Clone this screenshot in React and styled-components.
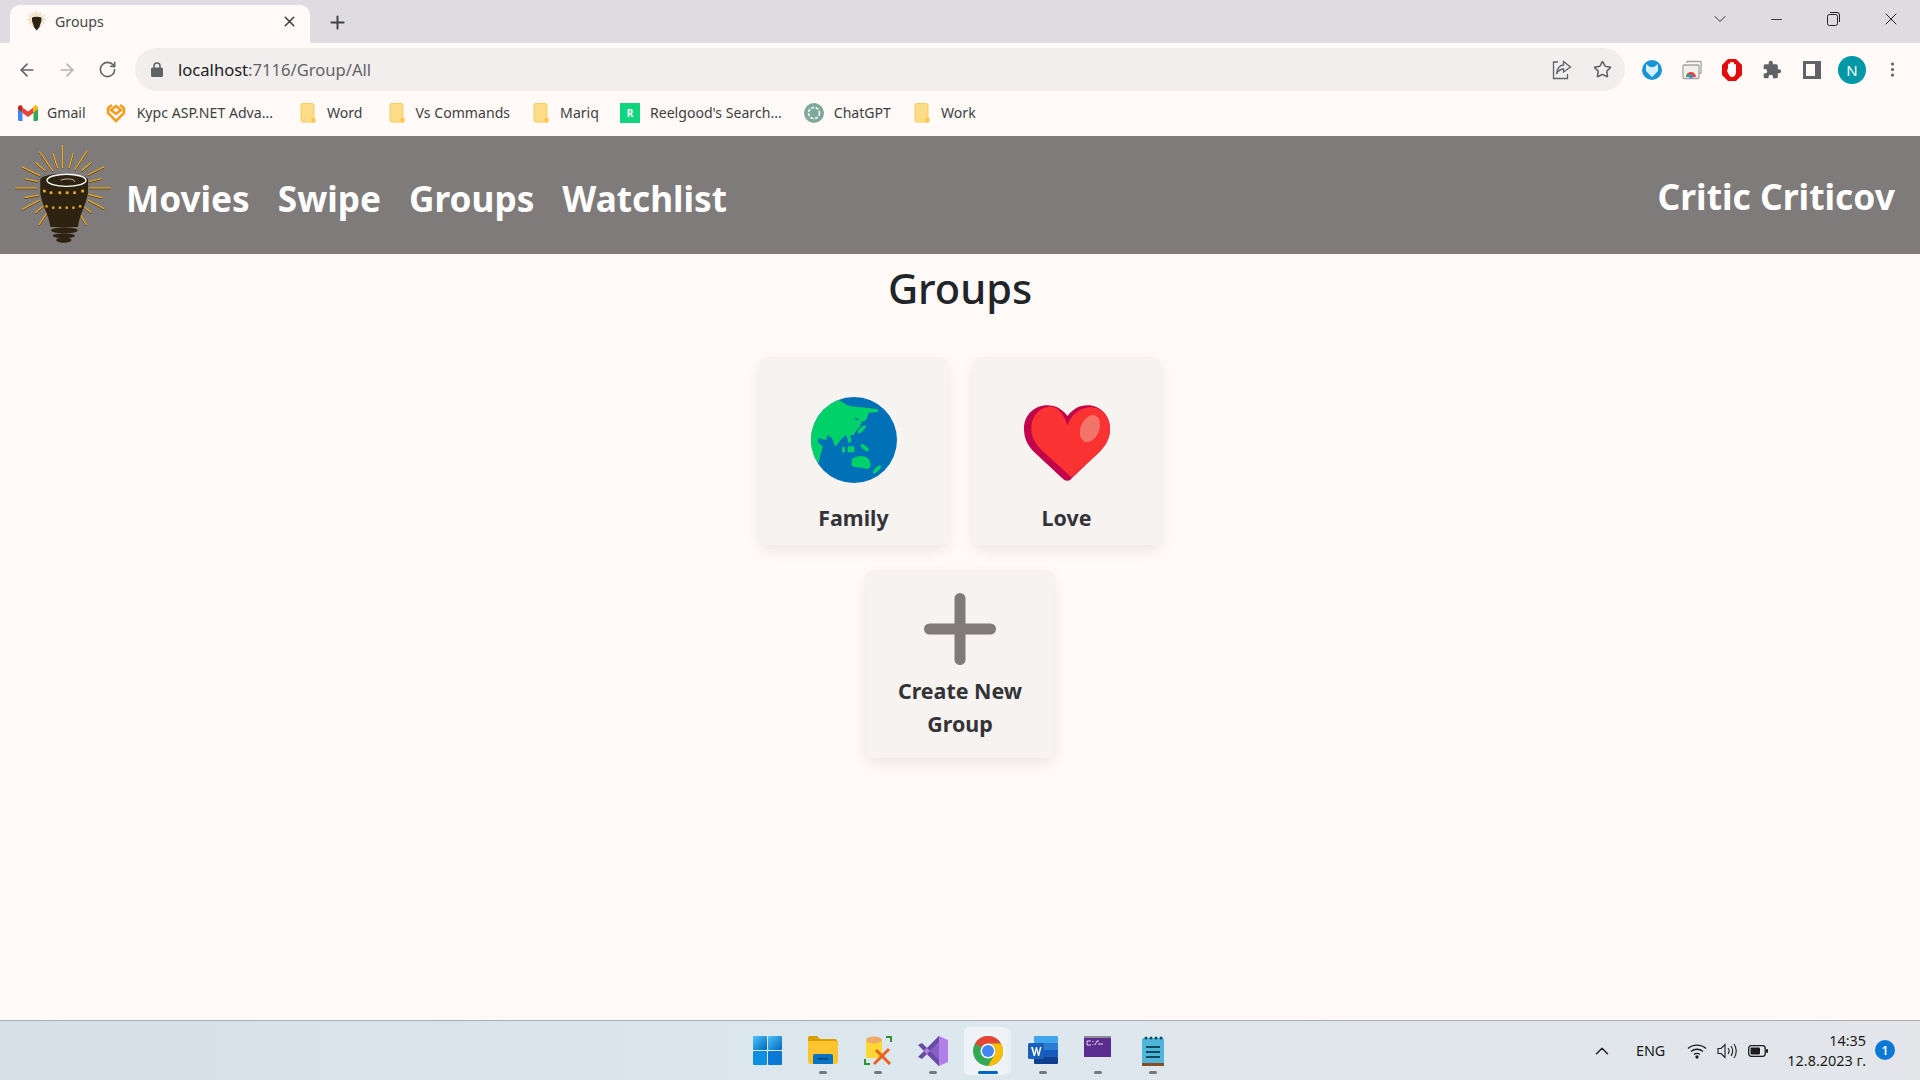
import React from "react";
import styled, { createGlobalStyle } from "styled-components";
import { ArrowLeft, ArrowRight, RotateCw, Star, Plus, X, Minus, ChevronDown, ChevronUp, MoreVertical } from "lucide-react";

const Global = createGlobalStyle`
  html, body { margin: 0; padding: 0; height: 100%; overflow: hidden; background: #fffaf7; }
  body { font-family: "Noto Sans", "Open Sans", sans-serif; }
  #root { height: 100%; }
  * { box-sizing: border-box; }
`;

const Page = styled.div`width:1920px;height:1080px;display:flex;flex-direction:column;background:#fffaf7;position:relative;`;
const TabStrip = styled.div`height:43px;background:#dedce0;display:flex;align-items:flex-end;padding-left:10px;flex:none;`;
const Tab = styled.div`width:300px;height:38px;background:#fffaf7;border-radius:10px 10px 0 0;display:flex;align-items:center;padding:0 12px 6px 17px;`;
const TabTitle = styled.span`font-size:14.2px;color:#45474a;margin-left:9px;flex:1;`;
const NewTab = styled.div`width:54px;height:38px;display:flex;align-items:center;justify-content:center;color:#3f4145;padding-bottom:4px;`;
const WindowControls = styled.div`margin-left:auto;height:43px;display:flex;align-items:flex-start;color:#222;`;
const WinButton = styled.div`width:${p=>p.$w||57}px;height:38px;display:flex;align-items:center;justify-content:center;`;
const Toolbar = styled.div`height:48px;display:flex;align-items:flex-start;padding:5px 8px 0 7px;flex:none;`;
const ToolButton = styled.div`width:${p=>p.$w||40}px;height:43px;display:flex;align-items:center;justify-content:center;color:${p=>p.$dim?"#b4b4b6":"#5f6368"};flex:none;`;
const Omnibox = styled.div`margin:0 7px 0 8px;flex:1;height:43px;background:#f1eeed;border-radius:22px;display:flex;align-items:center;padding:0 3px 0 12px;`;
const Url = styled.div`font-size:16.6px;color:#202124;margin-left:11px;flex:1;span{color:#5f6368;}`;
const Avatar = styled.div`width:28px;height:28px;border-radius:50%;background:#0097a7;color:#fff;font-size:15px;display:flex;align-items:center;justify-content:center;`;
const Bookmarks = styled.div`height:45px;display:flex;align-items:center;padding:0 0 2px 18px;flex:none;`;
const Bookmark = styled.div`display:flex;align-items:center;margin-right:${p=>p.$mr}px;font-size:14.1px;color:#3c3f43;white-space:nowrap;`;
const BookmarkIcon = styled.span`display:flex;margin-right:${p=>p.$mr||11}px;`;
const ReelIcon = styled.span`width:20px;height:20px;background:#0fd67e;color:#fff;font-size:10px;font-weight:700;display:flex;align-items:center;justify-content:center;margin-right:10px;`;
const NavBar = styled.header`height:118px;background:#7f7b7a;display:flex;align-items:center;padding:0 25px 0 15px;flex:none;`;
const NavLinks = styled.nav`display:flex;gap:28px;margin-left:15px;margin-top:6px;`;
const NavLink = styled.a`font-size:35.2px;font-weight:700;color:#fff;`;
const UserName = styled.div`margin-left:auto;font-size:35.4px;font-weight:700;color:#fff;margin-top:2px;`;
const Main = styled.main`flex:1;display:flex;flex-direction:column;align-items:center;`;
const Title = styled.h1`margin:0;font-size:41.5px;font-weight:500;color:#212529;line-height:68px;margin-bottom:35px;`;
const CardGrid = styled.div`width:420px;display:flex;flex-wrap:wrap;justify-content:center;gap:25px;`;
const Card = styled.div`width:188px;height:188px;background:#f7f3f1;border-radius:8px;box-shadow:0 6px 14px rgba(0,0,0,.08);display:flex;flex-direction:column;align-items:center;padding-top:${p=>p.$top}px;`;
const CardLabel = styled.div`font-size:21.4px;font-weight:700;line-height:33px;color:#343338;text-align:center;margin-top:${p=>p.$gap}px;width:170px;`;
const Taskbar = styled.footer`height:60px;flex:none;border-top:1px solid #a9aeb2;background:linear-gradient(90deg,#d6e0e9 0%,#dde7ee 50%,#e3e5e9 100%);display:grid;grid-template-columns:1fr 440px 1fr;`;
const TaskIcons = styled.div`display:flex;grid-column:2;`;
const TaskSlot = styled.div`position:relative;width:55px;height:59px;display:flex;justify-content:center;padding-top:15px;`;
const Highlight = styled.div`position:absolute;left:4px;top:6px;width:43px;height:48px;background:#eff3f7;border-radius:5px;box-shadow:5px 0 0 -1px #e9eff3;`;
const TaskGlyph = styled.div`position:relative;`;
const Dot = styled.div`position:absolute;left:50%;bottom:6px;transform:translateX(-50%);width:${p=>p.$active?20:8}px;height:3px;border-radius:2px;background:${p=>p.$active?"#0067c0":"#74797d"};`;
const Tray = styled.div`grid-column:3;display:flex;align-items:center;justify-content:flex-end;color:#1c1c1c;padding-right:54px;`;
const TrayText = styled.div`font-size:14.4px;margin:0 22px 0 23px;`;
const TrayIcon = styled.span`display:flex;margin-right:${p=>p.$mr||10}px;`;
const Clock = styled.div`font-size:14.4px;line-height:20px;text-align:right;margin-left:9px;`;
const Badge = styled.div`position:absolute;right:25px;top:1040px;width:20px;height:20px;border-radius:50%;background:#0a78d4;color:#fff;font-size:12px;font-weight:600;display:flex;align-items:center;justify-content:center;`;

const rays=[[186,48,186,118],[117,68,157,125],[157,72,172,118],[218,72,205,118],[260,65,222,122],[105,100,135,125],[272,100,243,125],[65,113,120,140],[310,113,260,138],[73,148,112,157],[303,148,265,157],[45,176,110,176],[330,176,265,176],[73,205,115,197],[303,205,262,195],[65,240,118,212],[310,238,262,212],[105,250,128,230],[272,250,252,233],[115,287,140,250],[258,287,235,250]];
const Logo=({size=96})=>(
 <svg width={size} height={size*1.04} viewBox="45 48 285 297">
  {rays.map((r,i)=><line key={i} x1={r[0]} y1={r[1]+1.500} x2={r[2]} y2={r[3]+1.500} stroke="#1c1608" strokeWidth="4"/>)}
  {rays.map((r,i)=><line key={"y"+i} x1={r[0]} y1={r[1]} x2={r[2]} y2={r[3]} stroke="#f0aa23" strokeWidth="4"/>)}
  <path d="M120 150C130 128 250 128 262 150L262 190C255 230 238 250 232 292L150 292C144 250 125 230 120 190Z" fill="#2e2210"/>
  <ellipse cx="192" cy="302" rx="40" ry="9" fill="#2e2210"/><ellipse cx="190" cy="318" rx="33" ry="7" fill="#2e2210"/><ellipse cx="190" cy="331" rx="23" ry="8" fill="#2e2210"/>
  <ellipse cx="198" cy="153" rx="58" ry="18" fill="none" stroke="#fff" strokeWidth="4"/>
  <path d="M180 153C200 145 225 150 222 158" fill="none" stroke="#fff" strokeWidth="2"/>
  {[132,152,178,200,222,246].map((x,i)=><rect key={i} x={x-4} y={i==0||i==5?181:186} width="8" height="8" fill="#f0aa23"/>)}
  {[138,158,178,198,218,238].map((x,i)=><rect key={i} x={x-3} y={i==0||i==5?227:231} width="7" height="7" fill="#f0aa23"/>)}
 </svg>);
const Globe=()=>(
 <svg width="86" height="86" viewBox="212 171 258 258">
  <defs><clipPath id="g"><circle cx="341" cy="300" r="129"/></clipPath></defs>
  <circle cx="341" cy="300" r="129" fill="#0171b7"/>
  <g clipPath="url(#g)" fill="#00d169">
   <path d="M295 180L320 195L340 200L380 203L412 208L414 216L385 218L378 240L365 245L345 232L345 240L365 240L360 258L345 275L340 285L330 285L333 305L325 310L318 285L305 295L285 320L275 295L262 285L258 300L235 295L232 305L248 320L240 345L235 370L205 340L205 170Z"/>
   <ellipse cx="364" cy="268" rx="16" ry="6" transform="rotate(-45 364 268)"/>
   <rect x="305" y="320" width="9" height="18" rx="4"/><rect x="322" y="319" width="20" height="18" rx="4"/>
   <ellipse cx="373" cy="323" rx="15" ry="6" transform="rotate(40 373 323)"/>
   <path d="M335 358C350 345 375 345 385 358C392 370 395 385 380 387C360 380 340 385 333 375Z"/>
   <ellipse cx="410" cy="388" rx="16" ry="6" transform="rotate(-45 410 388)"/>
  </g>
 </svg>);
const Heart=()=>(
 <svg width="86" height="76" viewBox="0 0 257 226">
  <path d="M130 226C122 226 118 222 112 216L30 140C10 120 0 100 0 70C0 30 30 0 70 0C95 0 115 12 130 32C145 12 165 0 190 0C228 0 257 30 257 70C257 100 245 120 225 140L145 216C140 222 136 226 130 226Z" fill="#c2054b"/>
  <path d="M130 60C118 25 100 5 80 5C50 5 22 30 22 70C22 98 35 118 55 137L143 216L225 140C245 120 257 100 257 70C257 30 228 4 195 6C165 8 140 30 130 60Z" fill="#fb3232"/>
  <ellipse cx="197" cy="70" rx="28" ry="42" transform="rotate(22 197 70)" fill="#f3756a"/>
 </svg>);
const BigPlus=()=>(<svg width="72" height="72" viewBox="0 0 72 72"><path d="M36 5.500V66.500M5.500 36H66.500" stroke="#807b7a" strokeWidth="11" strokeLinecap="round"/></svg>);
const Folder=()=>(<svg width="16" height="20" viewBox="0 0 16 20"><path d="M1 2a1.500 1.500 0 0 1 1.500-1.500H12A2 2 0 0 1 14 2.500V19H2.500A1.500 1.500 0 0 1 1 17.500Z" fill="#fddc87" stroke="#f5cb62"/><rect x="11.500" y="15" width="4" height="4.500" rx="1" fill="#f7c84e"/></svg>);
const Gmail=()=>(<svg width="20" height="16" viewBox="0 0 20 16"><path d="M0 2v12.500A1.500 1.500 0 0 0 1.500 16H4.500V7Z" fill="#4285f4"/><path d="M20 2v12.500a1.500 1.500 0 0 1-1.500 1.500H15.500V7Z" fill="#34a853"/><path d="M4.500 8V2.500L10 6.500 15.500 2.500V8L10 12Z" fill="#ea4335"/><path d="M0 2.500C0 .5 2 -.5 3.500 .6L4.500 1.400V7.500L0 4Z" fill="#c5221f"/><path d="M20 2.500C20 .5 18 -.5 16.500 .6L15.500 1.400V7.500L20 4Z" fill="#fbbc04"/></svg>);
const Kypc=()=>(<svg width="20" height="20" viewBox="0 0 20 20" fill="none" stroke="#f59b1d" strokeWidth="2.500"><path d="M6 2L2 5V10L10 18L18 10V5L14 2"/><path d="M5 7L10 11L15 7L10 3Z"/></svg>);
const GptIcon=()=>(<svg width="20" height="20" viewBox="0 0 20 20"><circle cx="10" cy="10" r="10" fill="#7fa99b"/><circle cx="10" cy="10" r="5.500" fill="none" stroke="#fff" strokeWidth="1.500" strokeDasharray="3 1.500"/></svg>);
const Fav=()=>(<svg width="19" height="20" viewBox="45 48 285 297">{rays.map((r,i)=><line key={i} x1={r[0]} y1={r[1]} x2={r[2]} y2={r[3]} stroke="#e0c080" strokeWidth="10"/>)}<path d="M120 150C130 128 250 128 262 150L262 190C255 230 238 250 232 292L190 340L150 292C144 250 125 230 120 190Z" fill="#2e2210"/></svg>);
const Lock=()=>(<svg width="12" height="15" viewBox="0 0 12 15"><path d="M3 6V4a3 3 0 0 1 6 0V6" fill="none" stroke="#5f6368" strokeWidth="1.500"/><rect y="5.500" width="12" height="9.500" rx="1.500" fill="#5f6368"/></svg>);
const Share=()=>(<svg width="20" height="20" viewBox="0 0 20 20" fill="none" stroke="#5f6368" strokeWidth="1.300"><path d="M6 2H1.500V18.500H15.500V14"/><path d="M11.500 1.500L18.500 7L11.500 12V9C8 9 6 11 4.500 14C4.800 9 7.500 5 11.500 5Z"/></svg>);
const Fox=()=>(<svg width="20" height="20" viewBox="0 0 20 20"><circle cx="10" cy="10" r="10" fill="#1a94d8"/><path d="M4 4L8 7H12L16 4L16 11L10 17L4 11Z" fill="#d4effa"/></svg>);
const Cast=()=>(<svg width="20" height="20" viewBox="0 0 20 20"><path d="M5 3V1.500H19V13H17" fill="none" stroke="#a5a5a5" strokeWidth="1.300"/><rect x="1" y="5" width="16" height="13.500" rx="1" fill="#f0f0f0" stroke="#a5a5a5" strokeWidth="1.300"/><path d="M4 17A5 5 0 0 1 14 17Z" fill="#ea4335"/><path d="M4 17A5 5 0 0 1 6 13L9 17Z" fill="#34a853"/><circle cx="9" cy="16.500" r="2" fill="#4285f4"/></svg>);
const Stop=()=>(<svg width="20" height="22" viewBox="0 0 20 22"><path d="M6 0H14L20 6V16L14 22H6L0 16V6Z" fill="#e30b0b"/><path d="M6 9V5.500a1 1 0 0 1 2 0V4a1 1 0 0 1 2 0a1 1 0 0 1 2 0V6a1 1 0 0 1 2 0V13C14 16 12 18 10 18C8 18 7 16 5 12Z" fill="#fff"/></svg>);
const Puzzle=()=>(<svg width="20" height="20" viewBox="0 0 24 24" fill="#5f6368"><path d="M20.500 11H19V7a2 2 0 0 0-2-2h-4V3.500a2.500 2.500 0 0 0-5 0V5H4a2 2 0 0 0-2 2v3.800h1.500a2.700 2.700 0 0 1 0 5.400H2V20a2 2 0 0 0 2 2h3.800v-1.500a2.700 2.700 0 0 1 5.400 0V22H17a2 2 0 0 0 2-2v-4h1.500a2.500 2.500 0 0 0 0-5Z"/></svg>);
const SidePanel=()=>(<svg width="18" height="18" viewBox="0 0 18 18"><path d="M0 0H18V18H0Z M3 3V15H12V3Z" fill="#5f6368" fillRule="evenodd"/></svg>);
const Restore=()=>(<svg width="13" height="14" viewBox="0 0 13 14" fill="none" stroke="#222" strokeWidth="1"><rect x=".5" y="2.500" width="10" height="11" rx="2"/><path d="M3 .5H10A2.500 2.500 0 0 1 12.500 3V10"/></svg>);
const Win=()=>(<svg width="29" height="29" viewBox="0 0 29 29"><defs><linearGradient id="w" x1="0" y1="0" x2="1" y2="1"><stop offset="0" stopColor="#4fc3f7"/><stop offset="1" stopColor="#0067c0"/></linearGradient></defs><rect width="14" height="14" rx="1" fill="url(#w)"/><rect x="15" width="14" height="14" rx="1" fill="url(#w)"/><rect y="15" width="14" height="14" rx="1" fill="#0f8fe0"/><rect x="15" y="15" width="14" height="14" rx="1" fill="#0a78d4"/></svg>);
const Explorer=()=>(<svg width="30" height="28" viewBox="0 0 30 28"><path d="M0 2a2 2 0 0 1 2-2H9L12 3H28L30 6V8H0Z" fill="#d99e00"/><path d="M0 5H28a2 2 0 0 1 2 2V26a2 2 0 0 1-2 2H2a2 2 0 0 1-2-2Z" fill="#fcc42d"/><path d="M5 20a2 2 0 0 1 2-2H23a2 2 0 0 1 2 2V28H5Z" fill="#0a74c4"/><rect x="10" y="22" width="10" height="1.500" fill="#063f70"/></svg>);
const Tool=()=>(<svg width="28" height="29" viewBox="0 0 28 29"><path d="M1 23v5h5M22 1h5v5" fill="none" stroke="#2d9436" strokeWidth="2"/><rect x="2" y="3" width="16" height="19" fill="#fdd835"/><ellipse cx="10" cy="4" rx="8" ry="3.500" fill="#eeaa68"/><path d="M10 28L25 13M12 14L26 28" stroke="#e8641f" strokeWidth="3"/></svg>);
const VS=()=>(<svg width="30" height="30" viewBox="0 0 30 30"><path d="M21 0L30 4V26L21 30L6 15Z" fill="#b27fe8"/><path d="M21 0V30L10 19L21 0Z" fill="#8661c5"/><path d="M0 9L4 7L21 24V30ZM0 21L4 23L21 6V0Z" fill="#6a4ba3"/></svg>);
const Chrome=()=>(<svg width="30" height="30" viewBox="0 0 30 30"><circle cx="15" cy="15" r="15" fill="#34a853"/><path d="M15 0A15 15 0 0 1 28 7.500H15A7.500 7.500 0 0 0 8.500 11.200L2 7.500A15 15 0 0 1 15 0Z" fill="#ea4335"/><path d="M28 7.500A15 15 0 0 1 15 30L21.500 18.700A7.500 7.500 0 0 0 15 7.500Z" fill="#fbbc04"/><circle cx="15" cy="15" r="7.500" fill="#fff"/><circle cx="15" cy="15" r="6" fill="#4285f4"/></svg>);
const Word=()=>(<svg width="30" height="28" viewBox="0 0 30 28"><rect x="6" width="24" height="7" rx="1" fill="#41a5ee"/><rect x="6" y="7" width="24" height="7" fill="#2b7cd3"/><rect x="6" y="14" width="24" height="7" fill="#185abd"/><rect x="6" y="21" width="24" height="7" rx="1" fill="#103f91"/><rect y="7" width="16" height="16" rx="1.500" fill="#1a5fb8"/><path d="M3 11H5L6.300 17L8 11H9L10.500 17L12 11H13.500L11.200 20H10L8.500 14L7 20H5.700Z" fill="#fff"/></svg>);
const Term=()=>(<svg width="27" height="21" viewBox="0 0 27 21"><rect width="27" height="21" fill="#5c2d91"/><rect width="27" height="2" fill="#8b8b94"/><path d="M3 5H7M3 5V9H7M9 5V6M9 8V9M11 9L13 5H15M14 8H19" stroke="#ddd" fill="none" strokeWidth="1"/></svg>);
const Notes=()=>(<svg width="22" height="30" viewBox="0 0 22 30"><rect y="2" width="22" height="26" rx="1.500" fill="#4fb6d9"/><rect y="27" width="22" height="3" fill="#8a4b25"/><g fill="#104a5c"><circle cx="4" cy="2" r="1.500"/><circle cx="9" cy="2" r="1.500"/><circle cx="14" cy="2" r="1.500"/><circle cx="19" cy="2" r="1.500"/><rect x="4" y="10" width="14" height="2"/><rect x="4" y="15" width="14" height="2"/><rect x="4" y="20" width="14" height="2"/></g></svg>);
const Wifi=()=>(<svg width="20" height="16" viewBox="0 0 20 16" fill="none" stroke="#1c1c1c" strokeWidth="1.300"><path d="M1 5.500C6 1 14 1 19 5.500M4 8.500C7.500 5.500 12.500 5.500 16 8.500M7 11.500C8.500 10 11.500 10 13 11.500"/><circle cx="10" cy="14" r="1" fill="#1c1c1c"/></svg>);
const Speaker=()=>(<svg width="21" height="16" viewBox="0 0 21 16" fill="none" stroke="#1c1c1c" strokeWidth="1.100"><path d="M1 5.500H4L8 1.500V14.500L4 10.500H1Z"/><path d="M11 5C12.500 7 12.500 9 11 11M14 3C16 6 16 10 14 13M17 1C20 5 20 11 17 15"/></svg>);
const Battery=()=>(<svg width="20" height="12" viewBox="0 0 20 12"><rect x=".7" y=".7" width="16.500" height="10.600" rx="2.500" fill="none" stroke="#1c1c1c" strokeWidth="1.300"/><rect x="2.500" y="2.500" width="9.500" height="7" rx="1" fill="#1c1c1c"/><rect x="18" y="4" width="2" height="4" rx="1" fill="#1c1c1c"/></svg>);

const apps=[[Win,0],[Explorer,1],[Tool,1],[VS,1],[Chrome,2],[Word,1],[Term,1],[Notes,1]];

export default function App(){
 return <Page><Global/>
  <TabStrip>
   <Tab><Fav/><TabTitle>Groups</TabTitle><X size={17} color="#3f4145" strokeWidth={2.2}/></Tab>
   <NewTab><Plus size={21} strokeWidth={2.2}/></NewTab>
   <WindowControls>
    <WinButton><ChevronDown size={20} strokeWidth={1.100}/></WinButton>
    <WinButton><Minus size={17} strokeWidth={1.200}/></WinButton>
    <WinButton><Restore/></WinButton>
    <WinButton $w={58}><X size={20} strokeWidth={1.200}/></WinButton>
   </WindowControls>
  </TabStrip>
  <Toolbar>
   <ToolButton><ArrowLeft size={20}/></ToolButton>
   <ToolButton $dim><ArrowRight size={20}/></ToolButton>
   <ToolButton><RotateCw size={19}/></ToolButton>
   <Omnibox>
    <ToolButton $w={20}><Lock/></ToolButton>
    <Url>localhost<span>:7116/Group/All</span></Url>
    <ToolButton><Share/></ToolButton>
    <ToolButton><Star size={19}/></ToolButton>
   </Omnibox>
   <ToolButton><Fox/></ToolButton>
   <ToolButton><Cast/></ToolButton>
   <ToolButton><Stop/></ToolButton>
   <ToolButton><Puzzle/></ToolButton>
   <ToolButton><SidePanel/></ToolButton>
   <ToolButton><Avatar>N</Avatar></ToolButton>
   <ToolButton><MoreVertical size={19}/></ToolButton>
  </Toolbar>
  <Bookmarks>
   <Bookmark $mr={20}><BookmarkIcon $mr={9}><Gmail/></BookmarkIcon>Gmail</Bookmark>
   <Bookmark $mr={27}><BookmarkIcon $mr={11}><Kypc/></BookmarkIcon>Kypc ASP.NET Adva...</Bookmark>
   <Bookmark $mr={26}><BookmarkIcon><Folder/></BookmarkIcon>Word</Bookmark>
   <Bookmark $mr={23}><BookmarkIcon><Folder/></BookmarkIcon>Vs Commands</Bookmark>
   <Bookmark $mr={21}><BookmarkIcon><Folder/></BookmarkIcon>Mariq</Bookmark>
   <Bookmark $mr={22}><ReelIcon>R</ReelIcon>Reelgood's Search...</Bookmark>
   <Bookmark $mr={23}><BookmarkIcon $mr={10}><GptIcon/></BookmarkIcon>ChatGPT</Bookmark>
   <Bookmark><BookmarkIcon><Folder/></BookmarkIcon>Work</Bookmark>
  </Bookmarks>
  <NavBar>
   <Logo/>
   <NavLinks><NavLink>Movies</NavLink><NavLink>Swipe</NavLink><NavLink>Groups</NavLink><NavLink>Watchlist</NavLink></NavLinks>
   <UserName>Critic Criticov</UserName>
  </NavBar>
  <Main>
   <Title>Groups</Title>
   <CardGrid>
    <Card $top={40}><Globe/><CardLabel $gap={18}>Family</CardLabel></Card>
    <Card $top={48}><Heart/><CardLabel $gap={20}>Love</CardLabel></Card>
    <Card $top={23}><BigPlus/><CardLabel $gap={9}>Create New Group</CardLabel></Card>
   </CardGrid>
  </Main>
  <Taskbar>
   <TaskIcons>
    {apps.map(([Icon,state],i)=><TaskSlot key={i}>
      {state===2&&<Highlight/>}
      <TaskGlyph><Icon/></TaskGlyph>
      {state>0&&<Dot $active={state===2}/>}
     </TaskSlot>)}
   </TaskIcons>
   <Tray>
    <ChevronUp size={22} strokeWidth={1.500}/>
    <TrayText>ENG</TrayText>
    <TrayIcon><Wifi/></TrayIcon>
    <TrayIcon><Speaker/></TrayIcon>
    <TrayIcon $mr={0}><Battery/></TrayIcon>
    <Clock>14:35<br/>12.8.2023 г.</Clock>
   </Tray>
   <Badge>1</Badge>
  </Taskbar>
 </Page>;
}
